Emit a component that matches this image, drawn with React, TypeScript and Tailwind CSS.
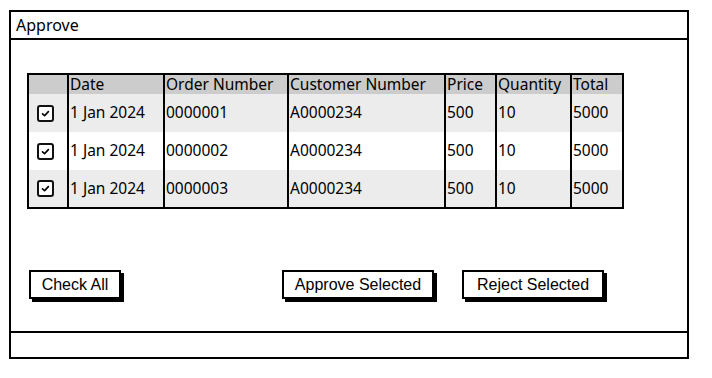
import React from "react";

type Order = {
  date: string;
  order: string;
  customer: string;
  price: string;
  qty: string;
  total: string;
};

const orders: Order[] = [
  { date: "1 Jan 2024", order: "0000001", customer: "A0000234", price: "500", qty: "10", total: "5000" },
  { date: "1 Jan 2024", order: "0000002", customer: "A0000234", price: "500", qty: "10", total: "5000" },
  { date: "1 Jan 2024", order: "0000003", customer: "A0000234", price: "500", qty: "10", total: "5000" },
];

const rowBg = ["bg-[#ececec]", "bg-white", "bg-[#ececec]"];
const rowH = ["h-[38px]", "h-[38px]", "h-[37px]"];

const columns: { title: string; key: keyof Order; width: string }[] = [
  { title: "Date", key: "date", width: "w-[96px]" },
  { title: "Order Number", key: "order", width: "w-[124px]" },
  { title: "Customer Number", key: "customer", width: "w-[157px]" },
  { title: "Price", key: "price", width: "w-[51px]" },
  { title: "Quantity", key: "qty", width: "w-[75px]" },
  { title: "Total", key: "total", width: "w-[52px]" },
];

const CheckBox = () => (
  <div className="w-[17px] h-[17px] rounded-[3px] border-2 border-[#111] bg-white flex items-center justify-center">
    <svg width="11" height="11" viewBox="0 0 11 11" fill="none">
      <path d="M2.5 5.8 L4.6 7.6 L8.4 3.6" stroke="#000" strokeWidth="1.6" strokeLinecap="round" strokeLinejoin="round" />
    </svg>
  </div>
);

const SketchButton = ({ label, className }: { label: string; className: string }) => (
  <button
    className={`h-[29px] border-2 border-black bg-white shadow-[3px_3px_0_#000] text-[16px] text-black flex items-center justify-center ${className}`}
    style={{ fontFamily: '"Liberation Sans", Arial, sans-serif' }}
  >
    {label}
  </button>
);

export default function App() {
  return (
    <div className="w-[712px] h-[378px] bg-white pt-[10px] pl-[9px]" style={{ fontFamily: '"Noto Sans", sans-serif' }}>
      <div className="w-[680px] h-[349px] border-2 border-black flex flex-col">
        <div className="h-[28px] border-b-2 border-black flex items-center pl-[5px] text-[16px] text-black">
          Approve
        </div>
        <div className="h-[291px] pl-[16px] pt-[33px]">
          <div className="w-[597px] border-2 border-black flex text-[15.5px] text-black leading-none">
            <div className="w-[38px] flex flex-col">
              <div className="h-[19px] bg-[#cccccc]" />
              {orders.map((o, i) => (
                <div key={o.order} className={`${rowH[i]} ${rowBg[i]} flex items-center pl-[8px]`}>
                  <CheckBox />
                </div>
              ))}
            </div>
            {columns.map((c) => (
              <div key={c.key} className={`${c.width} border-l-2 border-black flex flex-col`}>
                <div className="h-[19px] bg-[#cccccc] flex items-center pl-[1px] whitespace-nowrap">{c.title}</div>
                {orders.map((o, i) => (
                  <div key={o.order} className={`${rowH[i]} ${rowBg[i]} flex items-center pl-[1px] whitespace-nowrap`}>
                    {o[c.key]}
                  </div>
                ))}
              </div>
            ))}
          </div>
          <div className="flex mt-[61px] ml-[2px]">
            <SketchButton label="Check All" className="w-[92px]" />
            <SketchButton label="Approve Selected" className="w-[152px] ml-[161px]" />
            <SketchButton label="Reject Selected" className="w-[142px] ml-[28px]" />
          </div>
        </div>
        <div className="flex-1 border-t-2 border-black" />
      </div>
    </div>
  );
}
